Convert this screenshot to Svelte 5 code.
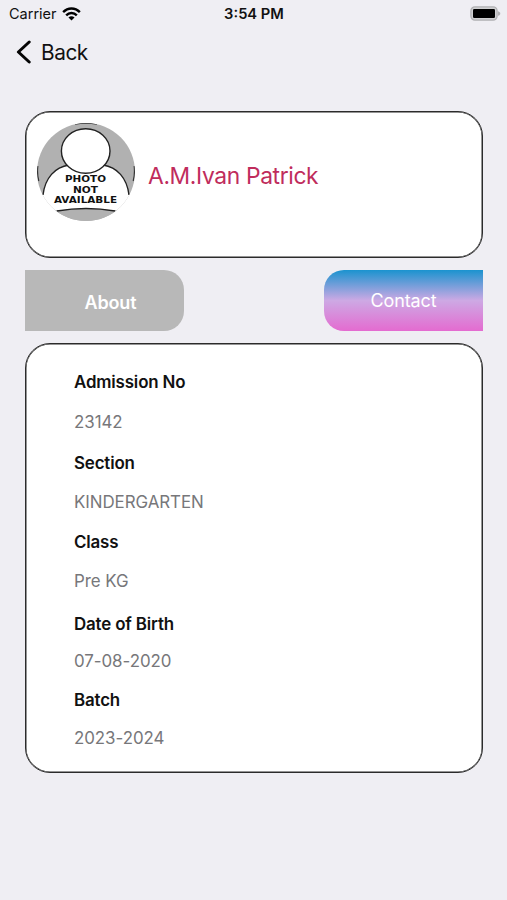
<script lang="ts">
	const student = {
		name: 'A.M.Ivan Patrick',
		fields: [
			{ label: 'Admission No', value: '23142' },
			{ label: 'Section', value: 'KINDERGARTEN' },
			{ label: 'Class', value: 'Pre KG' },
			{ label: 'Date of Birth', value: '07-08-2020' },
			{ label: 'Batch', value: '2023-2024' }
		]
	};

	let active = $state('about');
</script>

<div class="screen">
	<div class="status">
		<div class="carrier">
			<span>Carrier</span>
			<svg width="19" height="14" viewBox="0 0 20 14" fill="none" stroke="#000" stroke-width="2.5">
				<path d="M1.2 5.1C6.2 -0.1 13.8 -0.1 18.8 5.1" />
				<path d="M4.4 8.5C7.6 5.1 12.4 5.1 15.6 8.5" />
				<path d="M10 13.8L6.8 10.6C8.8 8.9 11.2 8.9 13.2 10.6Z" fill="#000" stroke="none" />
			</svg>
		</div>
		<span class="time">3:54 PM</span>
		<svg class="battery" width="31" height="15" viewBox="0 0 31 15">
			<rect x="0.9" y="0.9" width="26.2" height="13.2" rx="4" fill="#d0d0d2" stroke="#b0b0b2" stroke-width="1.3" />
			<rect x="3" y="3" width="22" height="9" rx="1.2" fill="#000" />
			<path d="M28 5.2C31 6 31 9 28 9.8Z" fill="#b0b0b2" />
		</svg>
	</div>

	<button class="back">
		<svg width="15" height="24" viewBox="0 0 15 24" fill="none" stroke="#050505" stroke-width="3" stroke-linecap="round" stroke-linejoin="round">
			<path d="M13.2 2L2.4 12L13.2 22" />
		</svg>
		<span>Back</span>
	</button>

	<main>
		<section class="card profile">
			<svg class="avatar" width="98" height="98" viewBox="0 0 98 98">
				<defs>
					<clipPath id="round"><circle cx="49" cy="49" r="49" /></clipPath>
				</defs>
				<g clip-path="url(#round)">
					<rect width="98" height="98" fill="#b1b1b1" />
					<path d="M6 72C8 55 18 43 34 42H63C80 43 90 55 92 72L98 72V87H0V72Z" fill="#fff" />
					<path d="M6 72C8 55 18 44 32 42M66 42C80 44 90 55 92 72" fill="none" stroke="#222" stroke-width="1.4" />
					<path d="M18 88Q49 82.5 80 88V98H18Z" fill="#b1b1b1" />
					<path d="M20 88Q49 83 78 88" fill="none" stroke="#222" stroke-width="1.3" />
					<path d="M38 1.2Q49 -0.8 60 1.2M0.8 43Q0 52 1.8 58M97.2 43Q98 52 96.2 58" fill="none" stroke="#333" stroke-width="1.2" />
					<ellipse cx="48.7" cy="28" rx="24.3" ry="22.3" fill="#fff" stroke="#222" stroke-width="1.4" />
				</g>
				<g class="caption" text-anchor="middle">
					<text x="48.5" y="59" textLength="41" lengthAdjust="spacingAndGlyphs">PHOTO</text>
					<text x="48.5" y="69.6" textLength="25" lengthAdjust="spacingAndGlyphs">NOT</text>
					<text x="48.5" y="79.8" textLength="63" lengthAdjust="spacingAndGlyphs">AVAILABLE</text>
				</g>
			</svg>
			<h1>{student.name}</h1>
		</section>

		<nav>
			<button class="tab about" onclick={() => (active = 'about')} aria-pressed={active === 'about'}>About</button>
			<button class="tab contact" onclick={() => (active = 'contact')} aria-pressed={active === 'contact'}>Contact</button>
		</nav>

		<section class="card details">
			<dl>
				{#each student.fields as field}
					<div class="field">
						<dt>{field.label}</dt>
						<dd>{field.value}</dd>
					</div>
				{/each}
			</dl>
		</section>
	</main>
</div>

<style>
	:global(body) {
		background: #efeef3;
	}

	.screen {
		box-sizing: border-box;
		width: 507px;
		height: 900px;
		overflow: hidden;
		background: #efeef3;
		color: #111;
		font-family: Inter, 'Liberation Sans', sans-serif;
	}

	.status {
		display: grid;
		grid-template-columns: 1fr auto 1fr;
		align-items: center;
		height: 27px;
		padding: 0 6px 0 9px;
		font-size: 14.5px;
	}

	.carrier {
		display: flex;
		align-items: center;
		gap: 5px;
	}

	.time {
		margin-left: -2px;
		font-size: 14.7px;
		font-weight: 600;
	}

	.battery {
		justify-self: end;
	}

	button {
		border: 0;
		padding: 0;
		background: none;
		color: inherit;
		font: inherit;
	}

	.back {
		display: flex;
		align-items: center;
		gap: 10px;
		height: 50px;
		padding-left: 16px;
		font-size: 20.8px;
		letter-spacing: -0.45px;
	}

	main {
		padding: 34px 24px 0 25px;
	}

	.card {
		box-sizing: border-box;
		border: 1px solid #2b2b2b;
		border-radius: 25px;
		background: #fff;
		box-shadow: inset 0 0 0 0.5px #2b2b2b;
	}

	.profile {
		display: flex;
		align-items: flex-start;
		gap: 13px;
		height: 147px;
		padding: 11px;
	}

	.avatar {
		flex: none;
	}

	.caption {
		font: bold 9.5px 'DejaVu Sans', sans-serif;
		fill: #111;
	}

	h1 {
		margin: 38px 0 0;
		color: #c02c5c;
		font-size: 22.8px;
		font-weight: 400;
		letter-spacing: -0.35px;
		line-height: 30px;
	}

	nav {
		display: flex;
		justify-content: space-between;
		margin: 12px 0;
	}

	.tab {
		width: 159px;
		height: 61px;
		color: #fff;
		font-size: 18px;
		letter-spacing: -0.15px;
	}

	.about {
		padding: 3px 0 0 12px;
		border-radius: 0 20px 20px 0;
		background: #b8b8b8;
		font-weight: 600;
	}

	.contact {
		border-radius: 20px 0 0 20px;
		background: linear-gradient(#1b93cf, #cda9e4 50%, #e46bd0);
	}

	.details {
		height: 430px;
		padding: 26px 48px 0;
	}

	dl,
	dd {
		margin: 0;
	}

	.field {
		display: grid;
		gap: 16px;
		margin-bottom: 17px;
		font-size: 16.9px;
		letter-spacing: -0.15px;
		line-height: 24px;
	}

	.field:nth-child(2) {
		gap: 15px;
		margin-bottom: 16px;
	}

	.field:nth-child(3) {
		gap: 15px;
		margin-bottom: 19px;
	}

	.field:nth-child(4) {
		gap: 13px;
		margin-bottom: 15px;
	}

	.field:nth-child(5) {
		gap: 14px;
	}

	dt {
		font-weight: 600;
	}

	dd {
		color: #77777a;
		letter-spacing: -0.05px;
	}
</style>
